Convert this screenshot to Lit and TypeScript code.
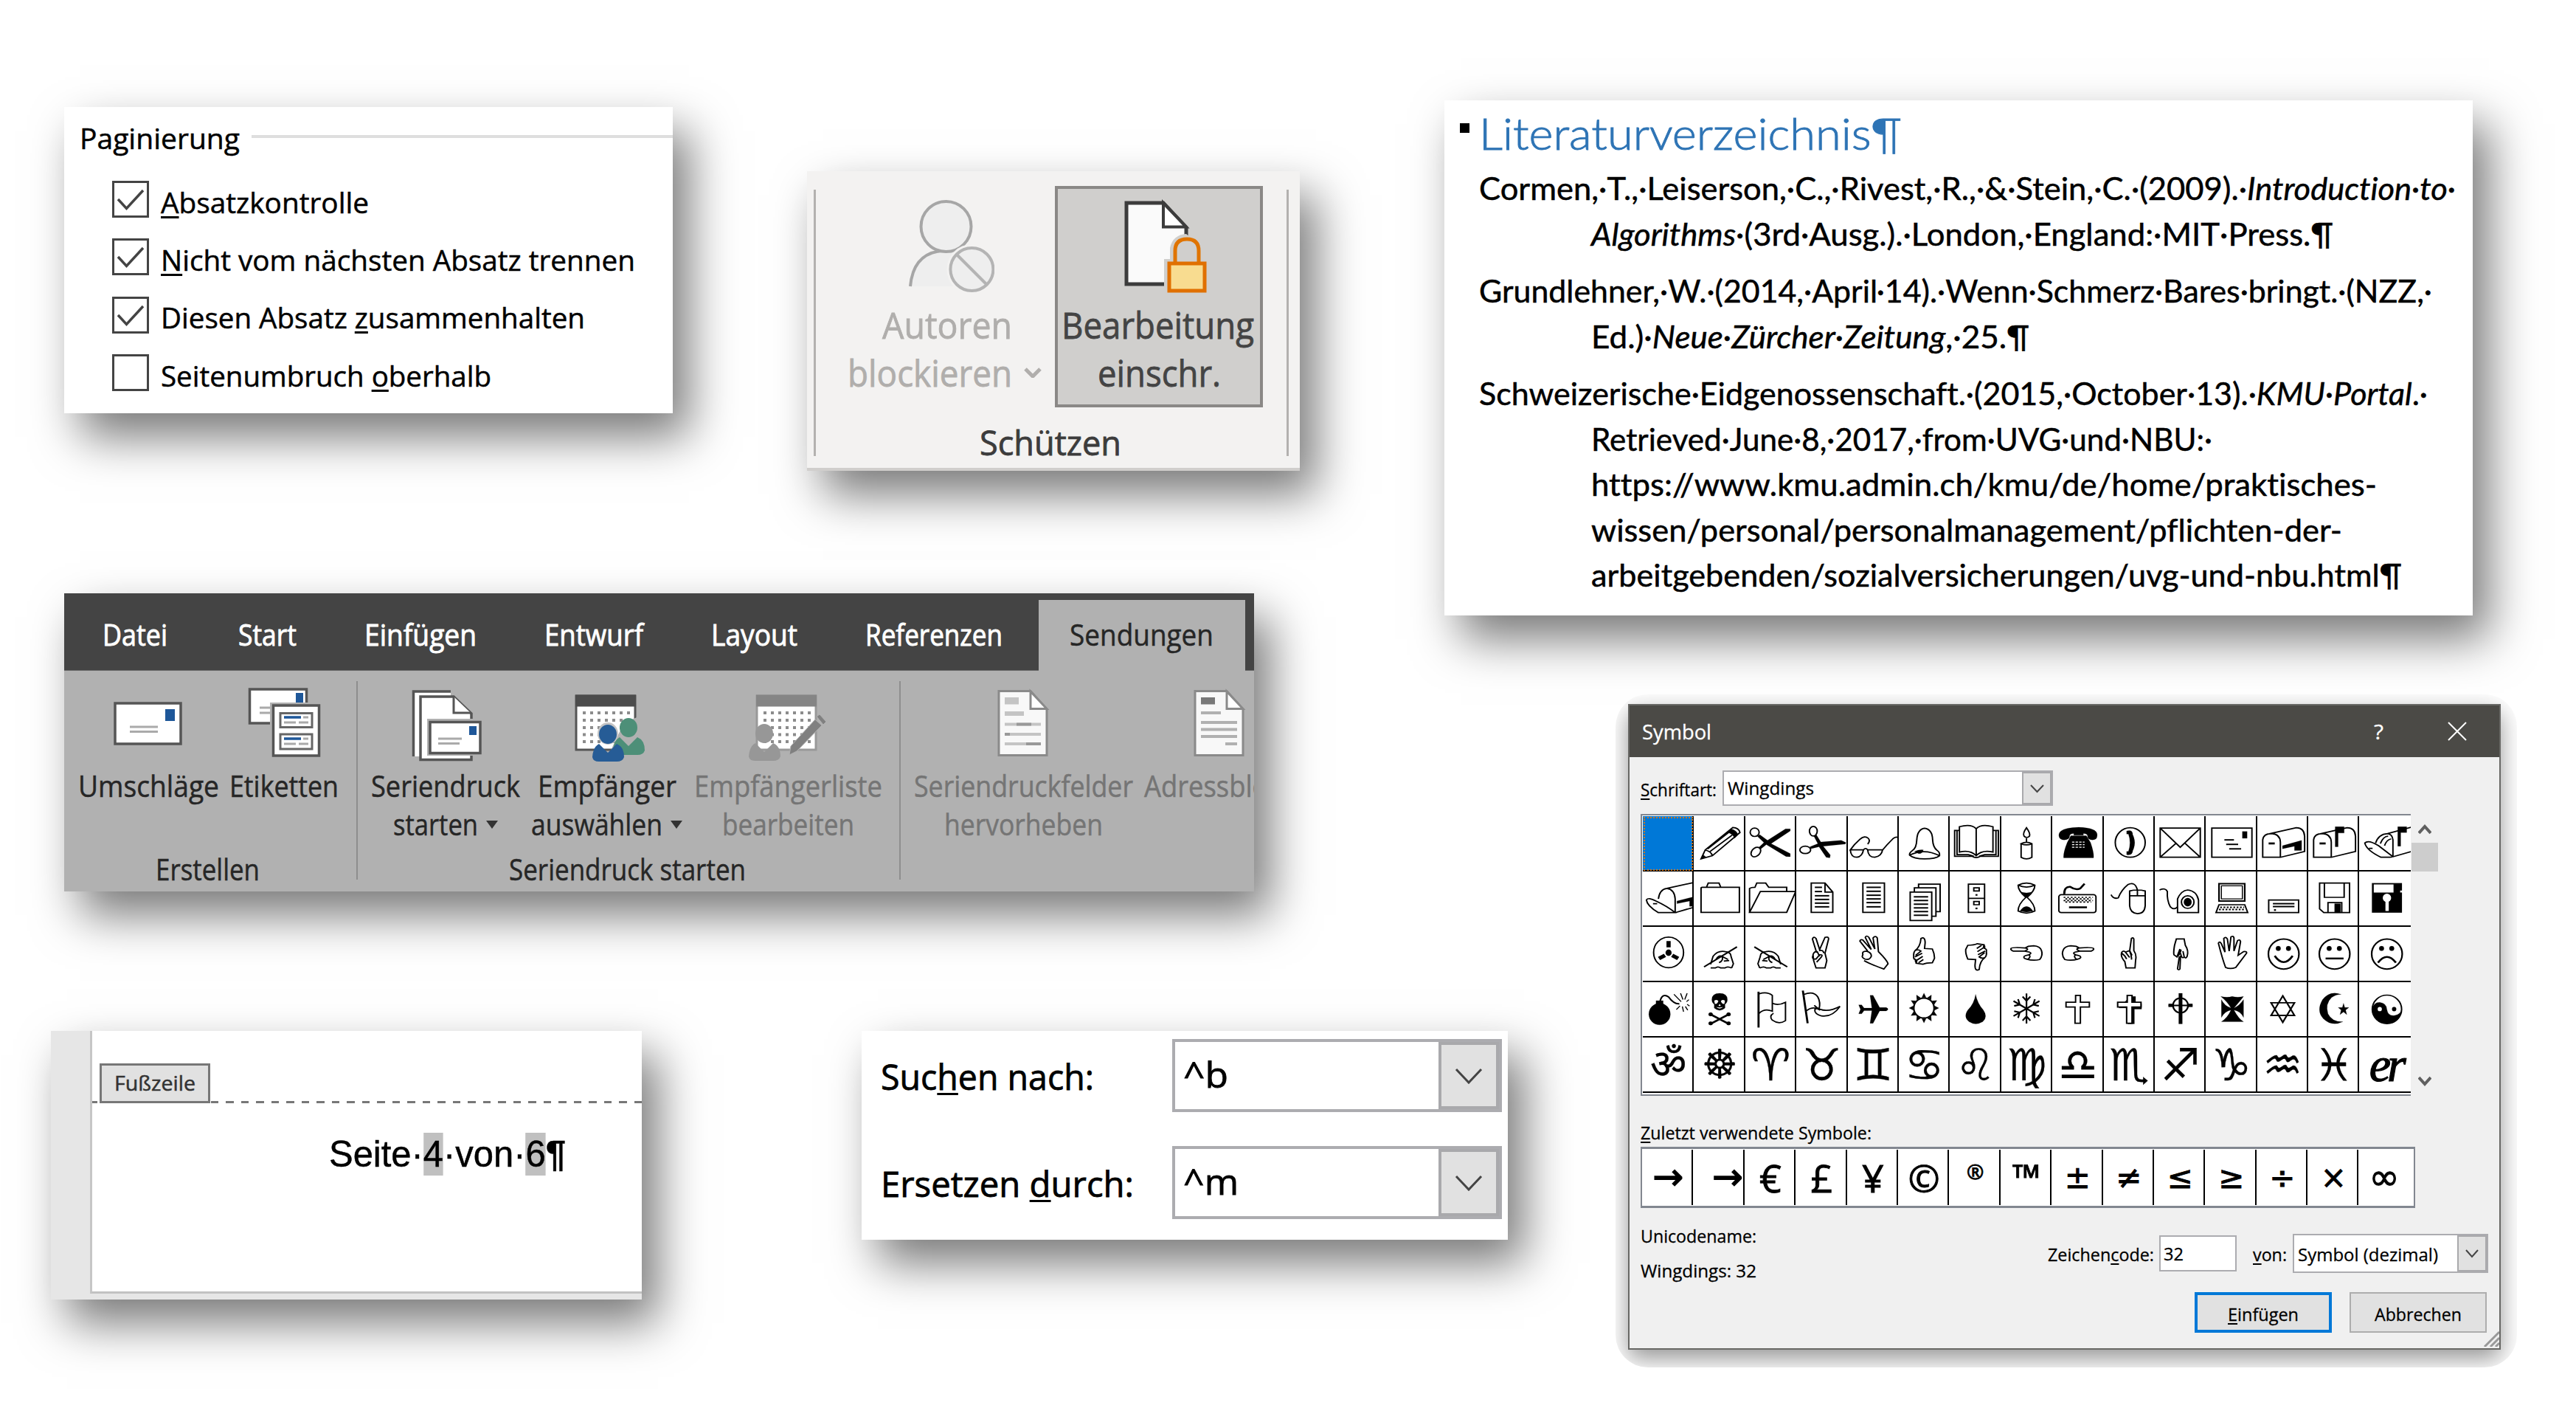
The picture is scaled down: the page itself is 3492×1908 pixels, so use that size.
import { LitElement, html, css, svg, nothing, TemplateResult } from "lit";
import { customElement, property } from "lit/decorators.js";

/** One line of text, condensed or widened horizontally to an exact width. */
@customElement("fit-text")
class FitText extends LitElement {
  @property({ type: Number }) w = 100;

  static styles = css`
    :host { display: inline-block; flex: none; white-space: nowrap; text-align: left; }
    span { display: inline-block; transform-origin: 0 50%; white-space: nowrap; }
  `;

  firstUpdated() {
    const span = this.renderRoot.querySelector("span") as HTMLElement;
    this.style.width = `${this.w}px`;
    const natural = span.getBoundingClientRect().width;
    if (natural > 0) span.style.transform = `scaleX(${this.w / natural})`;
  }

  render() {
    return html`<span><slot></slot></span>`;
  }
}

const mailbox = svg`<path class="m" d="M18 156V90Q20 66 48 66Q76 68 77 98V156zM40 67L130 44Q156 44 158 76V134L77 156"/><path class="f" d="M38 100h20v7h-20z"/>`;
const writing = svg`<path class="b" d="M32 152L142 76"/><path class="m" d="M54 142L62 112Q78 88 104 94Q122 96 122 112L130 140L124 156M72 124Q80 106 92 112Q98 128 82 136M92 112L112 124M98 130L116 128M54 156h16q8-8 18 0h14q8-8 22 0"/>`;
const thumb = svg`<path class="m" d="M54 90Q72 76 74 44Q88 36 88 60L86 82L112 84Q120 104 119 120L112 136Q92 136 80 142L58 138L60 128M54 90Q48 100 50 112Q48 122 56 124Q54 134 60 138M54 90Q64 84 74 92L56 108M78 100L54 114M80 112L58 128M82 124L66 136"/>`;
const point = svg`<path class="m" d="M32 82Q36 76 80 80L90 74L108 72Q130 74 134 90Q140 108 128 124Q106 130 84 122Q70 118 78 110M80 80Q96 84 78 92H40Q30 88 32 82M78 92L94 96Q104 100 92 106L78 110M92 106Q100 112 90 122"/>`;
const cross = "M78 50H94V76H124V94H94V156H76V94H46V76H78z";
const face = (mouth: string) => svg`<ellipse class="b" cx="88" cy="103" rx="51" ry="57"/><ellipse class="f" cx="70" cy="82" rx="8" ry="9"/><ellipse class="f" cx="104" cy="82" rx="8" ry="9"/><path class="h" d="${mouth}"/>`;
const rows = (x1: number, x2: number, ys: number[]) => ys.map((y) => svg`<path class="b" d="M${x1} ${y}H${x2}"/>`);
const rays = (n: number, r1: number, r2: number) => Array.from({ length: n }, (_, i) => {
  const a = (i * 2 * Math.PI) / n - Math.PI / 2, d = 0.2;
  const p = (r: number, t: number) => `${84 + r * Math.cos(t)} ${98 + r * 1.14 * Math.sin(t)}`;
  return svg`<path class="f" d="M${p(r1, a - d)}L${p(r2, a)}L${p(r1, a + d)}z"/>`;
});
const flakeArms = [0, 60, 120, 180, 240, 300].map((a) => svg`<path class="b" d="M0 0V-50M0 -26L-13 -40M0 -26L13 -40" transform="translate(84 100) scale(1 1.14) rotate(${a})"/>`);

type Cell = string | TemplateResult | null;

const GRID: Cell[][] = [
  [
    null,
    svg`<path class="m" d="M22 162L36 128L128 43Q148 44 152 62L60 150zM36 128Q56 134 60 150M44 124L114 62M52 134L126 72"/><path class="f" d="M110 62l12-14q18 4 24 22l-12 14q-6-18-24-22zM22 162l6-16 10 8z"/>`,
    svg`<ellipse class="m" cx="31" cy="61" rx="15" ry="16"/><ellipse class="m" cx="35" cy="136" rx="14" ry="20" transform="rotate(35 35 136)"/><path class="f" d="M40 76L48 70L74 92L134 48H150V56L86 104L150 142V154L136 153L70 108L50 126L44 120L62 100z"/>`,
    svg`<ellipse class="m" cx="57" cy="57" rx="13" ry="18"/><ellipse class="m" cx="30" cy="128" rx="18" ry="14"/><path class="f" d="M58 74L68 72L82 98L150 92L166 100L164 106L90 114L114 148L112 158L100 156L76 116L48 124L46 116L72 104z"/>`,
    svg`<path class="m" d="M8 128Q10 156 30 156Q48 154 52 128H8Q20 108 40 88Q56 72 68 84Q76 94 66 106M52 128Q59 118 66 128Q68 156 90 156Q112 152 116 128H66M116 128Q132 106 150 86Q160 76 169 82"/>`,
    svg`<path class="m" d="M86 46Q62 50 60 90Q59 120 46 130Q34 140 36 148Q50 162 86 162Q124 162 136 150Q138 138 128 130Q114 118 113 90Q112 50 86 46zM36 148Q84 120 136 150"/><path class="f" d="M52 134Q68 126 82 128Q78 144 66 142z"/>`,
    svg`<path class="m" d="M86 48Q70 28 30 40V136Q66 126 86 150Q106 126 142 136V40Q102 28 86 48zV150M30 54H14V152H72Q86 162 100 152H160V54H142M22 54V146H60L78 152M152 54V146H114L96 152"/>`,
    svg`<path class="m" d="M66 104V156Q84 168 102 156V104Q84 94 66 104Q84 114 102 104M84 44Q98 66 94 76Q84 86 76 76Q70 66 84 44zM84 84V98"/>`,
    svg`<path class="f" d="M22 74Q20 44 88 42Q154 44 150 74Q150 90 134 90Q118 88 118 76Q118 66 104 66V72H72V66Q58 66 58 76Q58 88 40 90Q24 90 22 74zM62 74H114L128 100Q140 140 138 158H38Q36 140 50 100z"/><path stroke="#fff" stroke-width="4" stroke-dasharray="8 4" d="M66 98H108M66 108H108M66 118H108"/>`,
    svg`<ellipse class="m" cx="88" cy="100" rx="50" ry="56"/><path class="f" d="M76 56Q94 50 96 66L94 76Q100 100 94 124L96 134Q94 150 76 146V134H82Q92 100 82 68H76z"/><path class="f" d="M90 58Q116 100 90 144L86 130Q98 100 86 72z"/>`,
    svg`<path class="m" d="M18 45H152V156H18zM18 45L85 118L152 45M18 156L72 102M152 156L100 102"/>`,
    svg`<path class="m" d="M18 45H152V156H18z"/><path class="f" d="M120 58h16v26h-16z"/>${rows(60, 92, [90])}${rows(66, 106, [107])}${rows(76, 116, [124])}`,
    svg`${mailbox}<path class="f" d="M84 112L148 92V130H124V114L84 124z"/>`,
    svg`${mailbox}<path class="f" d="M90 40h30v24H100V116h-10z"/>`,
    svg`<path class="m" d="M14 102Q26 88 60 112L106 152Q108 156 98 156H68Q20 130 14 102zM50 102Q60 68 90 66Q106 68 108 90V152M66 104Q76 76 92 76M80 112Q86 90 102 86M90 66L169 42M108 154L169 134M28 122h12"/><path class="f" d="M124 40h30v22H134V114h-10z"/>`,
  ],
  [
    svg`<path class="m" d="M12 108Q18 96 44 112Q82 132 108 156H52Q14 130 12 108zM52 104Q56 68 80 64Q106 68 108 104V156M80 64L169 42M108 156L169 136M34 122h14"/><path class="f" d="M114 112L169 96V132H156V112L114 122z"/>`,
    svg`<path class="m" d="M22 64V155H150V60H88L82 44H46L40 60H26Q22 60 22 64zM40 60H88"/>`,
    svg`<path class="m" d="M14 155V64Q20 60 32 60L38 44H68L78 60H138V76M14 155L50 76H168L138 155z"/>`,
    svg`<path class="m" d="M50 44H96L122 78V155H50zM96 44V78H122"/>${rows(62, 86, [60, 76])}${rows(62, 110, [92, 106, 120, 134])}`,
    svg`<path class="m" d="M50 44H122V155H50z"/>${rows(62, 110, [60, 75, 90, 104, 118, 134])}`,
    svg`<path class="m" d="M38 78H110V186H38zM52 78V62H124V170H110M66 62V48H138V152H124"/>${rows(50, 98, [96, 110, 124, 138, 152, 166])}`,
    svg`<path class="m" d="M60 48H114V155H60zM60 102H114M78 62H96V74H78zM78 114H96V126H78z"/><path class="f" d="M84 86h6v6h-6zM84 137h6v6h-6z"/>`,
    svg`<path class="m" d="M56 52Q84 36 112 52Q112 74 86 98Q112 124 112 150Q84 166 56 150Q56 124 82 98Q56 74 56 52zQ84 66 112 52"/><path class="f" d="M62 150Q84 114 106 150Q84 158 62 150zM66 78Q84 84 102 78L84 98z"/>`,
    svg`<rect class="m" x="22" y="88" width="124" height="68" rx="8"/><path class="m" stroke-dasharray="6 6" d="M38 98H136M38 110H136"/><path class="m" stroke-dasharray="6 6" d="M44 104H130M44 116H130"/><path class="h" d="M56 136H116M40 86Q40 56 60 58Q78 72 94 64L108 46"/>`,
    svg`<path class="m" d="M86 74Q112 66 138 74V130Q136 160 112 160Q88 158 86 130zM86 92H138M112 70V92M24 88Q32 106 48 100Q58 70 80 50Q104 36 112 70"/>`,
    svg`<path class="m" d="M76 156V104Q88 72 110 70Q140 74 146 108V156zM16 70Q36 60 42 76Q40 110 52 134Q64 148 76 134"/><ellipse class="m" cx="110" cy="116" rx="21" ry="24"/><ellipse class="f" cx="110" cy="116" rx="13" ry="16"/>`,
    svg`<path class="b" d="M42 46H128V112H42z"/><path d="M50 54H120V104H50z"/><path class="m" d="M42 126H128L138 156H32z"/><path class="b" stroke-dasharray="6 5" d="M46 136H126M42 144H130"/>`,
    svg`<path class="m" d="M38 108H138V156H38z"/>${rows(52, 124, [122, 133])}<path class="f" d="M56 143h6v6h-6z"/>`,
    svg`<path class="m" d="M38 44H138V156H52L38 142zM54 44V98H120V44M66 156V118H112V156"/><path class="f" d="M88 122h20v34H88z"/>`,
    svg`<path class="f" d="M38 44H138V72H132V80H138V156H38z"/><path fill="#fff" d="M44 49H110V80H44zM83 112H94V150H83z"/><ellipse fill="#fff" cx="88" cy="100" rx="14" ry="16"/>`,
  ],
  [
    svg`<ellipse class="m" cx="86" cy="97" rx="50" ry="58"/><ellipse class="f" cx="86" cy="98" rx="10" ry="12"/><path stroke="#000" stroke-width="14" d="M86 54V78M54 120L74 108M118 120L98 108"/>`,
    writing,
    svg`<g transform="translate(172 0) scale(-1 1)">${writing}</g>`,
    svg`<path class="m" d="M68 98L54 46Q58 34 66 44L78 86L96 40Q108 36 108 46L96 100L102 128L96 156H66L58 128L56 106Q60 92 70 94L78 112M56 108Q50 124 66 122L78 106Q90 104 84 114L68 134M76 90Q90 86 92 100"/>`,
    svg`<path class="m" d="M50 106Q46 92 62 92Q80 98 78 112Q72 128 56 122Q44 116 50 106zM66 92L40 54Q42 46 50 50L78 86L58 40Q62 30 70 40L90 84L84 42Q92 32 98 42L102 94Q132 128 134 140L120 160Q76 142 54 128"/>`,
    thumb,
    svg`<g transform="translate(170 206) scale(-1 -1)">${thumb}</g>`,
    point,
    svg`<g transform="translate(170 0) scale(-1 1)">${point}</g>`,
    svg`<path class="m" d="M86 92L92 44Q98 38 100 46V90Q110 106 106 126L104 156H74L70 132Q54 112 60 96Q66 88 72 96L86 90L94 108M60 100Q70 108 76 122M72 96L86 116M86 92Q94 112 92 124"/>`,
    svg`<path class="m" d="M82 112L76 160Q80 166 84 160L86 110M66 70L72 46H98L102 70Q114 90 108 112Q102 124 98 112L94 92M66 70Q62 96 64 106L74 114L84 84M98 114Q90 124 86 100M76 112Q84 104 88 86"/>`,
    svg`<path class="m" d="M64 154Q54 124 40 62Q44 52 50 64L62 96L58 44Q64 36 70 46L76 92L82 38Q90 32 92 42V92L104 52Q112 46 114 56L106 108L124 94Q136 92 134 100Q110 136 98 154Q80 162 64 154z"/>`,
    face("M58 110Q88 158 118 110"),
    face("M58 120H118"),
    face("M58 136Q88 92 118 136"),
  ],
  [
    svg`<ellipse class="f" cx="56" cy="121" rx="36" ry="41"/><path class="f" d="M44 70h24v14H44z"/><path class="b" d="M58 70Q66 40 86 56Q104 84 122 82"/><path d="M128 74L104 46M134 66L126 42M140 66L148 42M146 74L154 66M148 84L156 90M142 92L150 106M132 92L136 112M124 90L112 104"/>`,
    svg`<path class="f" d="M58 66Q58 42 84 42Q110 42 110 66Q110 78 102 84V98Q84 116 66 98V84Q58 78 58 66z"/><path fill="#fff" d="M66 70Q76 64 80 72Q76 84 68 82zM102 70Q92 64 88 72Q92 84 100 82zM84 82l4 8h-8zM72 94Q84 106 96 94Q84 98 72 94z"/><path class="h" d="M54 122L114 158M114 122L54 158"/><ellipse class="f" cx="54" cy="122" rx="7" ry="7"/><ellipse class="f" cx="114" cy="122" rx="7" ry="7"/><ellipse class="f" cx="54" cy="156" rx="7" ry="7"/><ellipse class="f" cx="114" cy="156" rx="7" ry="7"/>`,
    svg`<path class="h" stroke-width="6" d="M44 36V172"/><path class="m" d="M46 44Q72 34 90 50V110Q64 98 46 118M90 80Q110 90 134 76V146Q112 162 90 144Q78 128 94 118"/>`,
    svg`<path class="h" stroke-width="6" d="M22 32L38 156"/><path class="m" d="M26 46Q58 32 72 56Q82 76 76 104Q56 90 34 108M60 88Q92 124 146 92Q120 134 84 128Q60 120 62 104Q70 94 80 106"/>`,
    svg`<path class="f" d="M36 86H46L54 98H80L74 50H84L106 96H128Q140 102 128 109H106L84 156H74L80 108H54L46 120H36L42 103z"/>`,
    svg`<ellipse class="b" cx="84" cy="98" rx="34" ry="38"/>${rays(12, 36, 50)}`,
    svg`<path class="f" d="M84 46Q90 80 110 106Q126 132 108 150Q84 166 62 150Q42 132 58 106Q80 80 84 46z"/>`,
    svg`${flakeArms}`,
    svg`<path class="m" d="${cross}"/>`,
    svg`<path class="f" d="M88 54H106V82H126V102H102V158H80V98H50z"/><path fill="#fff" stroke="#000" stroke-width="5" d="${cross}"/>`,
    svg`<path class="f" d="M80 42H92V158H80zM46 82H62V94H46zM110 82H126V94H110z"/><path class="b" d="M46 88H126"/><ellipse class="b" cx="86" cy="88" rx="25" ry="28"/>`,
    svg`<path class="f" d="M48 54Q70 60 86 54Q104 60 124 54Q118 64 92 98Q110 90 124 66V134Q114 110 92 106Q108 140 124 150H50Q70 136 82 106Q62 110 50 134V66Q60 90 82 98Q70 74 48 54z"/>`,
    svg`<path class="b" d="M85 52L124 126H46zM85 152L46 78H124z"/>`,
    svg`<path class="f" d="M110 46Q72 30 48 66Q26 108 50 138Q78 170 116 150Q80 152 66 120Q56 82 78 58Q92 46 110 46zM118 80l4 16h14l-11 10 4 17-11-10-12 10 4-17-10-10h14z"/>`,
    svg`<ellipse class="m" cx="88" cy="103" rx="49" ry="54"/><path class="f" d="M39 103Q42 76 64 76Q88 80 88 104Q92 130 114 126Q134 122 137 103Q134 156 88 157Q42 154 39 103z"/><ellipse fill="#fff" cx="64" cy="102" rx="7" ry="8"/><ellipse class="f" cx="112" cy="102" rx="7" ry="8"/>`,
  ],
  ["ॐ", "☸", "♈", "♉", "♊", "♋", "♌", "♍", "♎", "♏", "♐", "♑", "♒", "♓", "er"],
];

const RECENT = ["→", "→", "€", "£", "¥", "©", "®", "™", "±", "≠", "≤", "≥", "÷", "×", "∞"];

const envelope = svg`<rect x="10" y="28" width="89" height="55" fill="#fff" stroke="#555" stroke-width="3.5"/><rect x="78" y="36" width="13" height="16" fill="#1e5799"/><path stroke="#aaa" stroke-width="3" d="M30 60H68M30 66.500H68"/>`;
const page = (light: boolean) => svg`<path d="M21 11.500H64L86 36V98.500H21z" fill="#f8f8f8" stroke="#8a8a8a" stroke-width="3"/><path d="M64 12V35.500H86z" fill="#fff" stroke="#8a8a8a" stroke-width="3"/><rect x="29" y="20" width="19" height="9.500" fill="${light ? "#c4c4c4" : "#787878"}"/>`;
const table = (c: string, s: string) => svg`<rect x="13" y="18" width="80" height="73" fill="#fff" stroke="${s}" stroke-width="3"/><rect x="12" y="16.500" width="82" height="16" fill="${c}"/><path stroke="#8c8c8c" stroke-width="4" stroke-dasharray="4 6" d="M22 41H86M22 51H86M22 61H86M22 70.500H86M22 80H86"/>`;
const person = (x: number, y: number, c: string) => svg`<g transform="translate(${x} ${y})"><ellipse cx="22" cy="13" rx="12" ry="13" fill="${c}"/><path fill="${c}" d="M10 26L22 38L34 26Q44 30 44 44Q42 50 34 50H10Q2 50 1 44Q2 30 10 26z"/></g>`;

const ICONS: Record<string, TemplateResult> = {
  envelope,
  labels: svg`<rect x="8.500" y="9" width="77" height="46" fill="#fff" stroke="#555" stroke-width="3.500"/><rect x="71" y="14" width="10" height="14" fill="#1e5799"/><path stroke="#aaa" stroke-width="3" d="M22 34H40M22 41H40"/><rect x="36" y="27" width="68" height="76" fill="#b1b1b1"/><rect x="40.500" y="31" width="62" height="68" fill="#fff" stroke="#555" stroke-width="3.500"/><g fill="#fff" stroke="#666" stroke-width="3"><rect x="50" y="41.500" width="43" height="19"/><rect x="50" y="70" width="43" height="20"/></g><path stroke="#1e5799" stroke-width="3.500" d="M55 47H78M55 76H78"/><path stroke="#aaa" stroke-width="3" d="M81 47H88M55 54H71M75 54H88M81 76H88M55 83H71M75 83H88"/>`,
  merge: svg`<path d="M11 100V12H62V100z" fill="#fff"/><path d="M11.500 100V12H62" fill="none" stroke="#555" stroke-width="3.500"/><path d="M21 19H66L90 42V104.500H21z" fill="#fff" stroke="#555" stroke-width="3.500"/><path d="M66 19V41H89" fill="#fff" stroke="#555" stroke-width="3"/><rect x="30" y="49" width="78" height="50" fill="#b1b1b1"/><rect x="34" y="53.500" width="68" height="42" fill="#fff" stroke="#555" stroke-width="3.500"/><rect x="87" y="59" width="10" height="12" fill="#1e5799"/><path stroke="#aaa" stroke-width="3" d="M45 76H77M45 82.500H74"/>`,
  people: svg`${table("#4c4c4c", "#555")}<path fill="#b1b1b1" d="M78 54L98 46V96H58z"/>${person(62, 48, "#4d8f78")}<ellipse cx="56" cy="69" rx="14" ry="15" fill="#c4c4c4"/>${person(34, 57, "#265c96")}`,
  editlist: svg`${table("#858585", "#999")}${person(1, 56, "#979797")}<path fill="#808080" stroke="#b1b1b1" stroke-width="1" d="M57 98L59 86L92 50L101 58L67 93zM94 46L98 43L107 53L103 57z"/>`,
  fields: svg`${page(true)}<g stroke="#c4c4c4" stroke-width="4"><path stroke-width="6" d="M29 42H55"/><path d="M29 56.500H78M29 70H78M29 83H78"/></g><path stroke="#999" stroke-width="4" d="M45 56.500H65M29 70H36M58 83H78"/>`,
  address: svg`${page(false)}<path stroke="#b0b0b0" stroke-width="4" d="M29 41H56M29 54H78M29 63.500H78M29 73H78M62 83H78"/>`,
};

interface RibbonButton { icon: string; width: number; lines: [string, number][]; menu?: boolean; off?: boolean }
const GROUPS: { cls: string; label: string; labelWidth: number; items: RibbonButton[] }[] = [
  { cls: "g1", label: "Erstellen", labelWidth: 141, items: [
    { icon: "envelope", width: 188, lines: [["Umschläge", 191]] },
    { icon: "labels", width: 145, lines: [["Etiketten", 148]] }] },
  { cls: "g2", label: "Seriendruck starten", labelWidth: 321, items: [
    { icon: "merge", width: 199, lines: [["Seriendruck", 202], ["starten", 115]], menu: true },
    { icon: "people", width: 205, lines: [["Empfänger", 188], ["auswählen", 178]], menu: true },
    { icon: "editlist", width: 252, lines: [["Empfängerliste", 255], ["bearbeiten", 179]], off: true }] },
  { cls: "g3", label: "", labelWidth: 0, items: [
    { icon: "fields", width: 295, lines: [["Seriendruckfelder", 297], ["hervorheben", 215]], off: true },
    { icon: "address", width: 203, lines: [["Adressblock", 205]], off: true }] },
];

@customElement("app-root")
class AppRoot extends LitElement {
  static styles = css`
    :host { display: block; }
    * { box-sizing: border-box; }
    svg { display: block; flex: none; }
    u { text-decoration-thickness: 3px; text-underline-offset: 4px; text-decoration-skip-ink: none; }
    .stage { width: 3492px; height: 1908px; background: #fff; display: flex; overflow: hidden; font-family: "Open Sans", "Noto Sans", sans-serif; color: #000; -webkit-text-stroke: 0.5px currentColor; }
    .left { width: 1958px; flex: none; }
    .right { flex: 1; padding-top: 136px; }
    .row { display: flex; align-items: flex-start; }
    .top { padding: 145px 0 0 87px; gap: 182px; height: 804px; }
    .bottom { padding: 189px 0 0 69px; gap: 298px; }
    .card { flex: none; background: #fff; box-shadow: 22px 32px 60px rgba(0, 0, 0, 0.53); overflow: hidden; }

    .pagination { width: 825px; height: 415px; font-size: 39px; }
    .legend { display: flex; align-items: center; height: 84px; line-height: 84px; padding-left: 21px; gap: 16px; margin-bottom: 2px; }
    .rule { flex: 1; height: 4px; background: #dedede; margin-top: -4px; }
    .check { display: flex; align-items: center; height: 78.300px; padding-left: 65px; gap: 16px; }
    .check fit-text { padding-top: 7px; line-height: 60px; }

    .protect { width: 668px; height: 406px; margin-top: 87px; background: #f3f2f1; border-bottom: 4px solid #d0cecc; display: flex; padding: 20px 15px 0 9px; color: #444; font-size: 50px; line-height: 65.500px; -webkit-text-stroke-width: 0.8px; }
    .vline { width: 3px; height: 361px; background: #b3b1af; margin-top: 5px; flex: none; }
    .protect-body { flex: 1; display: flex; flex-direction: column; align-items: center; }
    .protect-row { display: flex; width: 100%; height: 300px; padding-left: 20px; }
    .tool { display: flex; flex-direction: column; align-items: center; }
    .author { width: 304px; color: #b0aeac; }
    .author .first { margin-left: 11px; }
    .author .second { display: flex; align-items: center; gap: 16px; margin: -1px 0 0 4px; }
    .restrict { width: 282px; background: #d0cfcd; box-shadow: inset 0 0 0 4px #8a8886; }
    .protect svg.big { margin-top: 14px; margin-bottom: 4px; }
    .restrict .first { margin-left: -3px; }
    .restrict .second { margin-top: -1px; }
    .protect-title { font-size: 45px; line-height: 66px; margin-top: 15px; margin-left: -3px; color: #3c3c3c; }

    .ribbon { width: 1613px; height: 404px; margin-left: 87px; background: #b1b1b1; font-size: 39.500px; color: #262626; }
    .tabs { height: 105px; background: #444; display: flex; color: #fff; line-height: 113px; padding-left: 52px; gap: 92px; border-bottom: 1px solid #6a6a6a; }
    .tab-first { margin-right: 4px; }
    .tabs fit-text { height: 104px; -webkit-text-stroke-width: 0.9px; }
    .tab-active { width: 280px; height: 97px; margin: 9px 0 0 -43px; background: #b1b1b1; color: #262626; line-height: 95px; display: flex; justify-content: center; flex: none; }
    .tab-active fit-text { height: 90px; margin-left: -2px; -webkit-text-stroke-width: 0.5px; }
    .groups { display: flex; height: 299px; }
    .group { display: flex; flex-direction: column; align-items: center; flex: none; padding-top: 16px; }
    .g1 { width: 396px; padding-left: 20px; }
    .g2 { width: 734px; padding-left: 19px; }
    .g3 { width: 600px; padding-left: 19px; }
    .buttons { display: flex; gap: 17px; width: 100%; height: 227px; }
    .rb { display: flex; flex-direction: column; align-items: center; line-height: 51.700px; flex: none; }
    .rb svg.icon { margin-bottom: 5px; }
    .rb.off { color: #757575; }
    .line { display: flex; align-items: center; gap: 11px; }
    .group-label { line-height: 52px; }
    .g1 .group-label { margin-left: -27px; }
    .g2 .group-label { margin-left: -23px; }
    .sep { width: 2px; height: 269px; background: #8e8e8e; margin-top: 14px; flex: none; }

    .footer { width: 801px; height: 364px; background: #e6e6e6; padding-left: 53px; }
    .sheet { height: 356px; background: #fff; border-left: 3px solid #c6c6c6; border-bottom: 3px solid #c2c2c2; }
    .tagline { height: 98px; padding: 44px 0 0 10px; background: repeating-linear-gradient(90deg, #777 0 7px, transparent 7px 17px, #777 17px 20.500px) 0 95px / 100% 3px no-repeat; }
    .tag { width: 150px; height: 54px; border: 3px solid #777; background: #e1e1e1; font-size: 28px; line-height: 46px; color: #333; display: flex; justify-content: center; }
    .pageno { font-family: "Liberation Sans", Arial, sans-serif; font-size: 50px; line-height: 58px; padding: 40px 0 0 321px; color: #000; }
    .field { background: #c0c0c0; display: inline-block; }

    .search { width: 876px; height: 283px; padding: 11px 8px 0 26px; font-size: 48px; display: flex; flex-direction: column; gap: 46px; -webkit-text-stroke-width: 0.8px; }
    .search-row { display: flex; justify-content: space-between; height: 99px; line-height: 102px; }
    .combo { display: flex; background: #fff; border: 2px solid #acacb0; flex: none; }
    .combo .val { flex: 1; }
    .drop { display: flex; align-items: center; justify-content: center; background: #e1e1e1; border: 2px solid #a9a9ac; flex: none; }
    .search .combo { width: 447px; border-width: 4px; line-height: 87px; }
    .search .val { padding-left: 11px; }
    .search .drop { width: 82px; border-width: 4px; }

    .biblio { width: 1394px; height: 698px; font-family: Lato, Carlito, sans-serif; font-size: 42px; line-height: 61.500px; color: #000; padding: 0 0 0 47px; font-variant-ligatures: none; }
    .bib-head { display: flex; align-items: center; height: 89px; line-height: 86px; font-size: 60px; font-weight: 300; color: #2e74b5; margin-left: -26px; gap: 13px; padding-bottom: 2px; -webkit-text-stroke-width: 0.9px; }
    .bullet { width: 13px; height: 13px; background: #000; margin-top: -12px; }
    .entry { display: flex; flex-direction: column; margin-bottom: 16px; }
    .hang { padding-left: 152px; }

    .halo { width: 1222px; height: 912px; margin: 107px 0 0 232px; padding: 13px 22px 24px 17px; border-radius: 44px; overflow: hidden; }
    .dialog { width: 1183px; height: 875px; background: #f0f0f0; border: 2px solid #686865; box-shadow: 0 12px 30px rgba(0, 0, 0, 0.42); font-size: 24px; line-height: 36px; display: flex; flex-direction: column; -webkit-text-stroke-width: 0.3px; }
    .dialog u { text-decoration-thickness: 2px; text-underline-offset: 3px; }
    .title { height: 70px; flex: none; background: #4b4a46; color: #fff; display: flex; align-items: center; padding: 0 44px 0 17px; font-size: 28px; }
    .title .grow { flex: 1; }
    .title .help { margin-right: 87px; }
    .font-row { display: flex; height: 48px; margin: 18px 0 0 15px; align-items: center; gap: 8px; }
    .font-row > fit-text { padding-top: 4px; }
    .font-combo { width: 448px; height: 48px; line-height: 44px; }
    .dialog .val { padding-left: 5px; }
    .dialog .drop { width: 40px; }
    .picker { display: flex; margin: 11px 0 0 15px; height: 382px; }
    .grid { width: 1044px; height: 382px; background: #fff; border: 2px solid #828790; border-right: none; padding: 1px 0 3px 1px; display: grid; grid-template-columns: repeat(15, 69.400px); grid-auto-rows: 75px; overflow: hidden; flex: none; }
    .cell { border-right: 2px solid #000; border-bottom: 2px solid #000; padding-left: 2px; display: flex; align-items: center; justify-content: center; font-family: "DejaVu Sans", "Noto Sans", sans-serif; font-size: 54px; line-height: 72px; color: #000; overflow: hidden; font-variant-emoji: text; }
    .cell svg { margin-top: 1px; }
    .cell:nth-child(15n) { border-right: none; }
    .cell.zodiac { font-size: 60px; }
    .cell.ligature { font-family: "Liberation Serif", serif; font-style: italic; font-size: 66px; letter-spacing: -5px; -webkit-text-stroke-width: 1.200px; }
    .cell.selected { background: #0078d7; outline: 2px dotted #d07820; outline-offset: -3px; }
    .cell path, .cell ellipse, .cell rect { fill: none; stroke: #000; stroke-width: 3.500; }
    .cell .m { stroke-width: 4.800; }
    .cell .b { stroke-width: 5.500; }
    .cell .h { stroke-width: 7; }
    .cell .f { fill: #000; stroke-width: 0.500; }
    .cell [fill="#fff"] { fill: #fff; stroke: none; }
    .cell [fill="#fff"][stroke] { stroke: #000; stroke-width: 5; }
    .cell [stroke="#fff"] { stroke: #fff; }
    .cell [stroke-width="14"] { stroke-width: 14; }
    .scroll { width: 36px; display: flex; flex-direction: column; align-items: center; padding: 13px 0 12px; margin-left: 1px; }
    .thumb { width: 36px; height: 39px; background: #cdcdcd; margin-top: 11px; }
    .scroll .grow { flex: 1; }
    .recent-label { margin: 30px 0 0 15px; height: 39px; line-height: 39px; }
    .recent { margin: 0 0 0 15px; width: 1050px; height: 83px; background: #fff; border: 3px solid #828790; border-width: 3px 2px; padding: 1px 0; display: flex; flex: none; }
    .rcell { width: 69.400px; flex: none; border-right: 2px solid #000; padding-left: 3px; display: flex; align-items: center; justify-content: center; font-size: 52px; line-height: 77px; color: #000; -webkit-text-stroke-width: 0.9px; }
    .rcell:last-child { border-right: none; }
    .rcell.arrow { font-family: "DejaVu Sans", sans-serif; font-size: 50px; -webkit-text-stroke-width: 1.400px; }
    .rcell.small { font-size: 28px; line-height: 58px; align-items: flex-start; }
    .rcell.mark { font-size: 50px; font-weight: 600; }
    .rcell.shift { justify-content: flex-end; }
    .rcell.math { font-family: "DejaVu Sans", sans-serif; font-size: 42px; }
    .rcell.last { font-size: 50px; padding-left: 0; }
    .code-row { display: flex; margin: 35px 15px 0 15px; height: 53px; align-items: center; }
    .names { flex: 1; display: flex; flex-direction: column; gap: 11px; height: 53px; margin-top: -30px; }
    .code-row > fit-text { padding-top: 3px; }
    .code { width: 105px; height: 49px; background: #fff; border: 2px solid #acacb0; line-height: 45px; padding-left: 4px; margin: 0 22px 0 7px; }
    .kind { width: 265px; height: 53px; line-height: 51px; margin-left: 8px; }
    .actions { display: flex; justify-content: flex-end; gap: 24px; margin: 26px 17px 0 0; }
    .btn { width: 186px; height: 55px; background: #e1e1e1; border: 2px solid #adadad; line-height: 52px; padding-top: 2px; display: flex; justify-content: center; }
    .btn.primary { border: 4px solid #0078d7; padding-top: 0; }
    .grip { align-self: flex-end; margin-top: -3px; }
  `;

  chevron(w: number, h: number, s: number, c = "#444") {
    return html`<svg width=${w + 4} height=${h + 4} viewBox="-2 -2 ${w + 4} ${h + 4}"><path d="M0 0L${w / 2} ${h}L${w} 0" fill="none" stroke=${c} stroke-width=${s} /></svg>`;
  }

  checkRow(on: boolean, width: number, text: TemplateResult) {
    return html`<div class="check">
      <svg width="50" height="50"><rect x="1.5" y="1.5" width="47" height="47" fill="#fff" stroke="#444" stroke-width="3" />
        ${on ? svg`<path d="M8 25L19.500 37.500L42 13" fill="none" stroke="#444" stroke-width="3.500"/>` : nothing}</svg>
      <fit-text w=${width}>${text}</fit-text>
    </div>`;
  }

  pagination() {
    return html`<section class="card pagination">
      <div class="legend"><fit-text w="217">Paginierung</fit-text><div class="rule"></div></div>
      ${this.checkRow(true, 282, html`<u>A</u>bsatzkontrolle`)}
      ${this.checkRow(true, 643, html`<u>N</u>icht vom nächsten Absatz trennen`)}
      ${this.checkRow(true, 575, html`Diesen Absatz <u>z</u>usammenhalten`)}
      ${this.checkRow(false, 448, html`Seitenumbruch <u>o</u>berhalb`)}
    </section>`;
  }

  protect() {
    return html`<section class="card protect">
      <div class="vline"></div>
      <div class="protect-body">
        <div class="protect-row">
          <div class="tool author">
            <svg class="big" width="140" height="138" viewBox="114 34 140 138" fill="#eee" stroke="#a6a6a6" stroke-width="4">
              <path d="M140 156Q142 120 174 109H204V156" stroke="none" /><path d="M140 156Q144 112 182 108" fill="none" />
              <circle cx="188.500" cy="75" r="34" /><circle cx="223.400" cy="133" r="34" fill="#f3f2f1" stroke="none" />
              <circle cx="223.400" cy="133" r="29" stroke="#b4b4b4" /><path d="M202 112L244 154" stroke="#b4b4b4" />
            </svg>
            <fit-text class="first" w="176">Autoren</fit-text>
            <div class="second"><fit-text w="223">blockieren</fit-text>${this.chevron(20, 10, 5, "#b0aeac")}</div>
          </div>
          <div class="tool restrict">
            <svg class="big" width="140" height="138" viewBox="407 34 140 138">
              <path d="M433 43H483L514 76V153H433z" fill="#fafafa" /><path d="M486 153H433V43H483L514 76V88" fill="none" stroke="#3c3c3c" stroke-width="5" />
              <path d="M483 43V75.500H514z" fill="#fff" stroke="#3c3c3c" stroke-width="4" />
              <path d="M484 119H492V104Q496 86 514 85L520 90V168H484z" fill="#d0cfcd" />
              <path d="M499 125V108Q499 92 515 92Q531 92 531 108V125" fill="#d0cfcd" stroke="#e07400" stroke-width="5" />
              <rect x="491" y="125" width="48" height="37" fill="#f8dc90" stroke="#e07000" stroke-width="5" />
            </svg>
            <fit-text class="first" w="261">Bearbeitung</fit-text>
            <fit-text class="second" w="167">einschr.</fit-text>
          </div>
        </div>
        <fit-text class="protect-title" w="192">Schützen</fit-text>
      </div>
      <div class="vline"></div>
    </section>`;
  }

  ribbon() {
    const tabs: [string, number][] = [["Datei", 88], ["Start", 79], ["Einfügen", 152], ["Entwurf", 134], ["Layout", 117], ["Referenzen", 186]];
    return html`<section class="card ribbon">
      <div class="tabs">
        ${tabs.map(([t, w], i) => html`<fit-text class=${i ? "" : "tab-first"} w=${w}>${t}</fit-text>`)}
        <div class="tab-active"><fit-text w="195">Sendungen</fit-text></div>
      </div>
      <div class="groups">
        ${GROUPS.map((g, i) => html`
          ${i ? html`<div class="sep"></div>` : nothing}
          <div class="group ${g.cls}">
            <div class="buttons">
              ${g.items.map((b) => html`<div class="rb ${b.off ? "off" : ""}" style="width:${b.width}px">
                <svg class="icon" width="110" height="110" viewBox="0 0 110 110">${ICONS[b.icon]}</svg>
                ${b.lines.map(([t, w], n) => html`<div class="line"><fit-text w=${w}>${t}</fit-text>
                  ${b.menu && n === 1 ? html`<svg width="16" height="11"><path d="M0 0H16L8 11z" fill="#333" /></svg>` : nothing}</div>`)}
              </div>`)}
            </div>
            ${g.label ? html`<fit-text class="group-label" w=${g.labelWidth}>${g.label}</fit-text>` : nothing}
          </div>`)}
      </div>
    </section>`;
  }

  footerPanel() {
    return html`<section class="card footer"><div class="sheet">
      <div class="tagline"><div class="tag"><fit-text w="110">Fußzeile</fit-text></div></div>
      <div class="pageno"><fit-text w="321">Seite·<span class="field">4</span>·von·<span class="field">6</span><b>¶</b></fit-text></div>
    </div></section>`;
  }

  search() {
    const row = (w: number, label: TemplateResult, vw: number, value: string) => html`<div class="search-row">
      <fit-text w=${w}>${label}</fit-text>
      <div class="combo"><div class="val"><fit-text w=${vw}>${value}</fit-text></div><div class="drop">${this.chevron(34, 18, 3)}</div></div>
    </div>`;
    return html`<section class="card search">
      ${row(289, html`Suc<u>h</u>en nach:`, 61, "^b")}
      ${row(343, html`Ersetzen <u>d</u>urch:`, 75, "^m")}
    </section>`;
  }

  biblio() {
    return html`<section class="card biblio">
      <div class="bib-head"><div class="bullet"></div><fit-text w="573">Literaturverzeichnis¶</fit-text></div>
      <div class="entry">
        <fit-text w="1324">Cormen,·T.,·Leiserson,·C.,·Rivest,·R.,·&amp;·Stein,·C.·(2009).·<i>Introduction·to·</i></fit-text>
        <fit-text class="hang" w="1006"><i>Algorithms</i>·(3rd·Ausg.).·London,·England:·MIT·Press.¶</fit-text>
      </div>
      <div class="entry">
        <fit-text w="1292">Grundlehner,·W.·(2014,·April·14).·Wenn·Schmerz·Bares·bringt.·(NZZ,·</fit-text>
        <fit-text class="hang" w="594">Ed.)·<i>Neue·Zürcher·Zeitung</i>,·25.¶</fit-text>
      </div>
      <div class="entry">
        <fit-text w="1286">Schweizerische·Eidgenossenschaft.·(2015,·October·13).·<i>KMU·Portal</i>.·</fit-text>
        <fit-text class="hang" w="842">Retrieved·June·8,·2017,·from·UVG·und·NBU:·</fit-text>
        <fit-text class="hang" w="1065">https://www.kmu.admin.ch/kmu/de/home/praktisches-</fit-text>
        <fit-text class="hang" w="1018">wissen/personal/personalmanagement/pflichten-der-</fit-text>
        <fit-text class="hang" w="1099">arbeitgebenden/sozialversicherungen/uvg-und-nbu.html¶</fit-text>
      </div>
    </section>`;
  }

  cell(c: Cell, row: number) {
    if (c === null) return html`<div class="cell selected"></div>`;
    if (typeof c === "string") return html`<div class="cell ${c === "er" ? "ligature" : row === 4 && c !== "☸" && c !== "ॐ" ? "zodiac" : ""}">${c === "er" || c === "ॐ" ? c : c + "\uFE0E"}</div>`;
    return html`<div class="cell"><svg width="69" height="75" viewBox="0 0 170 210" preserveAspectRatio="none">${c}</svg></div>`;
  }

  recentClass(i: number) {
    if (i < 2) return i ? "arrow shift" : "arrow";
    if (i === 6) return "small";
    if (i === 7) return "mark";
    if (i === 14) return "math last";
    return i > 7 ? "math" : "";
  }

  dialog() {
    return html`<div class="halo"><section class="dialog">
      <div class="title"><fit-text w="94">Symbol</fit-text><div class="grow"></div><fit-text class="help" w="13">?</fit-text>
        <svg width="26" height="26"><path d="M1 1L25 25M25 1L1 25" stroke="#fff" stroke-width="2" /></svg></div>
      <div class="font-row"><fit-text w="103"><u>S</u>chriftart:</fit-text>
        <div class="combo font-combo"><div class="val"><fit-text w="117">Wingdings</fit-text></div><div class="drop">${this.chevron(17, 9, 2)}</div></div></div>
      <div class="picker">
        <div class="grid">${GRID.map((r, i) => r.map((c) => this.cell(c, i)))}</div>
        <div class="scroll"><svg width="18" height="15"><path d="M1 13L9 4L17 13" fill="none" stroke="#606060" stroke-width="4" /></svg>
          <div class="thumb"></div><div class="grow"></div>
          <svg width="18" height="15"><path d="M1 2L9 11L17 2" fill="none" stroke="#606060" stroke-width="4" /></svg></div>
      </div>
      <div class="recent-label"><fit-text w="313"><u>Z</u>uletzt verwendete Symbole:</fit-text></div>
      <div class="recent">${RECENT.map((c, i) => html`<div class="rcell ${this.recentClass(i)}">${c}</div>`)}</div>
      <div class="code-row">
        <div class="names"><fit-text w="157">Unicodename:</fit-text><fit-text w="157">Wingdings: 32</fit-text></div>
        <fit-text w="144">Zeichen<u>c</u>ode:</fit-text><div class="code"><fit-text w="27">32</fit-text></div>
        <fit-text w="46"><u>v</u>on:</fit-text>
        <div class="combo kind"><div class="val"><fit-text w="190">Symbol (dezimal)</fit-text></div><div class="drop">${this.chevron(16, 9, 2)}</div></div>
      </div>
      <div class="actions">
        <div class="btn primary"><fit-text w="96"><u>E</u>infügen</fit-text></div>
        <div class="btn"><fit-text w="118">Abbrechen</fit-text></div>
      </div>
      <svg class="grip" width="22" height="22"><path d="M2 22L22 2M10 22L22 10M17 22L22 17" stroke="#999" stroke-width="3" /></svg>
    </section></div>`;
  }

  render() {
    return html`<main class="stage">
      <div class="left">
        <div class="row top">${this.pagination()}${this.protect()}</div>
        ${this.ribbon()}
        <div class="row bottom">${this.footerPanel()}${this.search()}</div>
      </div>
      <div class="right">${this.biblio()}${this.dialog()}</div>
    </main>`;
  }
}
